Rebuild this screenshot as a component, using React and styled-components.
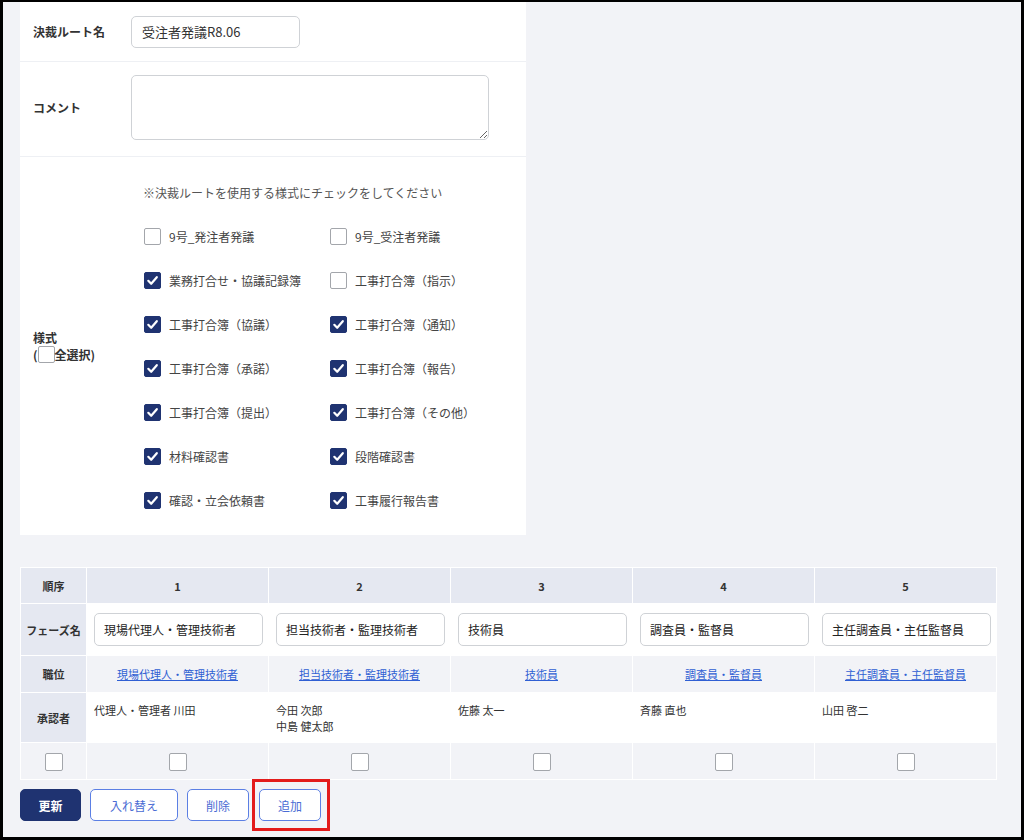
import React from "react";
import styled, { createGlobalStyle } from "styled-components";

const Global = createGlobalStyle`
  html, body { margin: 0; padding: 0; background: #000; }
  body { font-family: "Noto Sans CJK JP", "Noto Sans", "Liberation Sans", sans-serif; color: #333; }
  * { box-sizing: border-box; }
`;

const Frame = styled.div`
  width: 1024px;
  height: 840px;
  border-style: solid;
  border-color: #000;
  border-width: 2px 3px 3px 3px;
  background: #f2f3f7;
  padding: 0 24px 0 17px;
  overflow: hidden;
`;

const Card = styled.section`
  width: 506px;
  background: #fff;
`;

const FormRow = styled.div`
  display: flex;
  align-items: center;
  min-height: ${(p) => p.$h}px;
  border-bottom: ${(p) => (p.$last ? "none" : "1px solid #eef0f4")};
  padding: ${(p) => p.$pad || "0"};
`;

const Label = styled.div`
  width: 111px;
  flex: none;
  padding-left: 13px;
  font-size: 12px;
  font-weight: 700;
  line-height: 17px;
  color: #333;
`;

const TextInput = styled.input`
  width: 169px;
  height: 32px;
  border: 1px solid #cfd2d6;
  border-radius: 5px;
  padding: 0 10px;
  font: inherit;
  font-size: 13px;
  color: #333;
  outline: none;
`;

const TextArea = styled.textarea`
  display: block;
  width: 358px;
  height: 65px;
  border: 1px solid #cfd2d6;
  border-radius: 5px;
  font: inherit;
  font-size: 13px;
  outline: none;
  resize: both;
`;

const Styles = styled.div`
  display: flex;
  flex-direction: column;
  gap: 27px;
  padding: 27px 0 26px 12px;
`;

const Note = styled.div`
  font-size: 12px;
  line-height: 17px;
  color: #555;
`;

const Grid = styled.div`
  display: grid;
  grid-template-columns: 186px 186px;
  row-gap: 27px;
  padding-left: 1px;
`;

const Item = styled.label`
  display: flex;
  align-items: center;
  gap: 8px;
  height: 17px;
  font-size: 12px;
  color: #444;
`;

const Box = styled.span`
  display: inline-flex;
  align-items: center;
  justify-content: center;
  flex: none;
  width: ${(p) => p.$s || 17}px;
  height: ${(p) => p.$s || 17}px;
  border-radius: 2px;
  background: ${(p) => (p.$on ? "#1f3371" : "#fff")};
  border: 1px solid ${(p) => (p.$on ? "#1f3371" : "#a3a6ab")};
  vertical-align: middle;
`;

const Check = ({ on, s }) => (
  <Box $on={on} $s={s}>
    {on && (
      <svg width="13" height="13" viewBox="0 0 13 13">
        <polyline points="2.3,6.8 5.2,9.8 10.8,3.2" fill="none" stroke="#fff" strokeWidth="2.2" strokeLinecap="round" strokeLinejoin="round" />
      </svg>
    )}
  </Box>
);

const AllSel = styled.div`
  display: flex;
  align-items: center;
`;

const Table = styled.table`
  margin-top: 32px;
  width: 977px;
  border-collapse: collapse;
  table-layout: fixed;
`;

const Th = styled.th`
  background: #e5e8f1;
  border: 1px solid #fff;
  font-size: 11px;
  font-weight: 700;
  color: #333;
  text-align: center;
  height: ${(p) => p.$h}px;
  padding: 0;
`;

const Td = styled.td`
  background: ${(p) => (p.$alt ? "#f2f3f7" : "#fff")};
  border: 1px solid #fff;
  height: ${(p) => p.$h}px;
  padding: ${(p) => p.$pad || "0 7px"};
  text-align: ${(p) => p.$align || "left"};
  vertical-align: ${(p) => p.$valign || "middle"};
  font-size: 11px;
  line-height: 16px;
  color: #333;
`;

const PhaseInput = styled.input`
  width: 100%;
  height: 33px;
  border: 1px solid #cfd2d6;
  border-radius: 5px;
  padding: 0 9px;
  font: inherit;
  font-size: 12px;
  color: #222;
  outline: none;
`;

const Link = styled.a`
  color: #2f5fd3;
  text-decoration: underline;
  font-size: 11px;
`;

const Buttons = styled.div`
  display: flex;
  gap: 9px;
  margin-top: 9px;
`;

const Btn = styled.button`
  height: 32px;
  width: ${(p) => p.$w}px;
  border-radius: 5px;
  font: inherit;
  font-size: 12px;
  font-weight: ${(p) => (p.$primary ? 700 : 400)};
  color: ${(p) => (p.$primary ? "#fff" : "#4a6cd4")};
  background: ${(p) => (p.$primary ? "#1f3371" : "#fff")};
  border: 1px solid ${(p) => (p.$primary ? "#1f3371" : "#5b7fe4")};
  cursor: pointer;
  padding: 0;
`;

const Marked = styled.div`
  position: relative;
  margin-left: 1px;
`;

const RedBox = styled.span`
  position: absolute;
  top: -10px;
  left: -7px;
  width: 78px;
  height: 52px;
  border: 3px solid #e31b1b;
  pointer-events: none;
`;

const styles = [
  ["9号_発注者発議", false],
  ["9号_受注者発議", false],
  ["業務打合せ・協議記録簿", true],
  ["工事打合簿（指示）", false],
  ["工事打合簿（協議）", true],
  ["工事打合簿（通知）", true],
  ["工事打合簿（承諾）", true],
  ["工事打合簿（報告）", true],
  ["工事打合簿（提出）", true],
  ["工事打合簿（その他）", true],
  ["材料確認書", true],
  ["段階確認書", true],
  ["確認・立会依頼書", true],
  ["工事履行報告書", true],
];

const phases = [
  { name: "現場代理人・管理技術者", approvers: ["代理人・管理者 川田"] },
  { name: "担当技術者・監理技術者", approvers: ["今田 次郎", "中島 健太郎"] },
  { name: "技術員", approvers: ["佐藤 太一"] },
  { name: "調査員・監督員", approvers: ["斉藤 直也"] },
  { name: "主任調査員・主任監督員", approvers: ["山田 啓二"] },
];

export default function App() {
  return (
    <>
      <Global />
      <Frame>
        <Card>
          <FormRow $h={60}>
            <Label>決裁ルート名</Label>
            <TextInput defaultValue="受注者発議R8.06" />
          </FormRow>
          <FormRow $h={94} $pad="13px 0 16px">
            <Label>コメント</Label>
            <TextArea />
          </FormRow>
          <FormRow $last>
            <Label>
              <div>様式</div>
              <AllSel>
                (<Check s={17} />全選択)
              </AllSel>
            </Label>
            <Styles>
              <Note>※決裁ルートを使用する様式にチェックをしてください</Note>
              <Grid>
                {styles.map(([t, on]) => (
                  <Item key={t}>
                    <Check on={on} />
                    {t}
                  </Item>
                ))}
              </Grid>
            </Styles>
          </FormRow>
        </Card>

        <Table>
          <colgroup>
            <col style={{ width: 66 }} />
            {phases.map((_, i) => (
              <col key={i} />
            ))}
          </colgroup>
          <tbody>
            <tr>
              <Th $h={36}>順序</Th>
              {phases.map((_, i) => (
                <Th key={i} $h={36}>{i + 1}</Th>
              ))}
            </tr>
            <tr>
              <Th $h={52}>フェーズ名</Th>
              {phases.map((p) => (
                <Td key={p.name} $h={52} $pad="0 5px 0 7px">
                  <PhaseInput defaultValue={p.name} />
                </Td>
              ))}
            </tr>
            <tr>
              <Th $h={37}>職位</Th>
              {phases.map((p) => (
                <Td key={p.name} $h={37} $alt $align="center">
                  <Link href="#">{p.name}</Link>
                </Td>
              ))}
            </tr>
            <tr>
              <Th $h={50}>承認者</Th>
              {phases.map((p) => (
                <Td key={p.name} $h={50} $valign="top" $pad="9px 7px 0">
                  {p.approvers.map((a) => (
                    <div key={a}>{a}</div>
                  ))}
                </Td>
              ))}
            </tr>
            <tr>
              <Td $h={37} $alt $align="center" $pad="0">
                <Check s={18} />
              </Td>
              {phases.map((p) => (
                <Td key={p.name} $h={37} $alt $align="center" $pad="0">
                  <Check s={18} />
                </Td>
              ))}
            </tr>
          </tbody>
        </Table>

        <Buttons>
          <Btn $primary $w={61}>更新</Btn>
          <Btn $w={88}>入れ替え</Btn>
          <Btn $w={62}>削除</Btn>
          <Marked>
            <Btn $w={62}>追加</Btn>
            <RedBox />
          </Marked>
        </Buttons>
      </Frame>
    </>
  );
}
